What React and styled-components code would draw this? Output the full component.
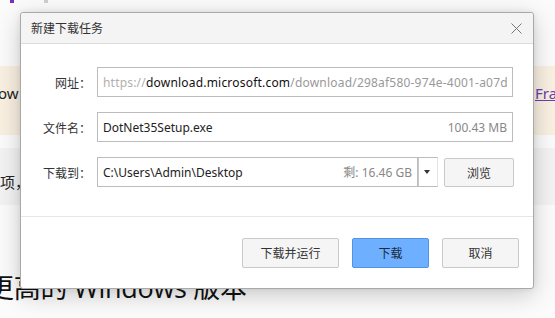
import React from "react";
import styled, { createGlobalStyle } from "styled-components";

const Global = createGlobalStyle`
  html, body { margin: 0; padding: 0; background: #fbfbfb; }
  body { font-family: "Noto Sans", "Noto Sans CJK SC", sans-serif; overflow: hidden; }
`;

const Page = styled.div`
  position: relative;
  width: 555px;
  height: 318px;
  overflow: hidden;
  background: #fbfbfb;
`;

const TopStrip = styled.div`
  height: 66px;
  display: flex;
  align-items: flex-start;
  gap: 30px;
  padding-left: 10px;
`;

const Mark = styled.div`
  width: 4px;
  height: 3px;
  background: ${(p) => p.$c};
`;

const Notice = styled.div`
  height: 69px;
  background: #f9f0e2;
  display: flex;
  align-items: center;
  justify-content: space-between;
  font-size: 15px;
  color: #222;
  padding-bottom: 16px;
  box-sizing: border-box;
`;

const NoticeText = styled.span`
  margin-left: -2px;
`;

const NoticeLink = styled.a`
  color: #6a3fb0;
  text-decoration: underline;
  margin-right: -14px;
  width: 34px;
  overflow: hidden;
  white-space: nowrap;
`;

const Gap = styled.div`
  height: ${(p) => p.$h}px;
`;

const GrayBand = styled.div`
  height: 57px;
  background: #f3f3f3;
  font-size: 15px;
  color: #222;
  padding-top: 23px;
  box-sizing: border-box;
`;

const Heading = styled.div`
  font-family: "Open Sans", "Noto Sans CJK SC", sans-serif;
  font-size: 27px;
  color: #111;
  margin-left: -13px;
  margin-top: 62px;
  white-space: nowrap;
  letter-spacing: -0.3px;
`;

const Dialog = styled.div`
  position: absolute;
  left: 20px;
  top: 12px;
  width: 514px;
  height: 277px;
  box-sizing: border-box;
  background: #fff;
  border: 1px solid #a9a9a9;
  border-radius: 3px;
  box-shadow: 0 6px 24px rgba(0, 0, 0, 0.2), 0 0 6px rgba(0, 0, 0, 0.08);
  display: flex;
  flex-direction: column;
  font-family: "Noto Sans", "Noto Sans CJK SC", sans-serif;
`;

const TitleBar = styled.div`
  height: 30px;
  flex: none;
  background: #f4f4f4;
  border-bottom: 1px solid #dcdcdc;
  border-radius: 3px 3px 0 0;
  display: flex;
  align-items: center;
  justify-content: space-between;
  padding: 0 10px 0 10px;
  font-size: 12px;
  color: #333;
`;

const CloseBtn = styled.div`
  width: 14px;
  height: 14px;
  display: flex;
  align-items: center;
  justify-content: center;
`;

const Body = styled.div`
  flex: 1;
  padding: 23px 20px 0 0;
  display: flex;
  flex-direction: column;
  gap: 15px;
  border-bottom: 1px solid #e6e6e6;
`;

const Row = styled.div`
  display: flex;
  align-items: center;
  height: 30px;
`;

const Label = styled.div`
  width: 70px;
  margin-right: 6px;
  flex: none;
  text-align: right;
  font-size: 12px;
  color: #333;
  font-family: "Noto Sans CJK SC", sans-serif;
`;

const Field = styled.div`
  flex: ${(p) => (p.$grow ? 1 : "none")};
  width: ${(p) => (p.$w ? `${p.$w}px` : "auto")};
  height: 30px;
  box-sizing: border-box;
  border: 1px solid #bcbcbc;
  background: #fff;
  display: flex;
  align-items: center;
  justify-content: space-between;
  padding: 0 5px 0 5px;
  font-size: 12px;
  color: #222;
  overflow: hidden;
  white-space: nowrap;
  min-width: 0;
`;

const Url = styled.span`
  letter-spacing: 0.2px;
  overflow: hidden;
`;

const Seg = styled.span`
  color: ${(p) => p.$c};
`;

const Side = styled.span`
  color: #888;
`;

const Drop = styled.div`
  width: 20px;
  height: 30px;
  box-sizing: border-box;
  border: 1px solid #bcbcbc;
  border-left: 1px solid #c8c8c8;
  border-right-color: #e4e4e4;
  display: flex;
  align-items: center;
  justify-content: center;
  flex: none;
`;

const Tri = styled.div`
  width: 0;
  height: 0;
  border-left: 3.5px solid transparent;
  border-right: 3.5px solid transparent;
  border-top: 4px solid #333;
  margin-left: -2px;
`;

const Button = styled.div`
  width: ${(p) => p.$w}px;
  height: ${(p) => p.$h || 30}px;
  box-sizing: border-box;
  border: 1px solid ${(p) => (p.$primary ? "#4f95e6" : "#c9c9c9")};
  background: ${(p) => (p.$primary ? "#6eb0ff" : "#f5f5f5")};
  border-radius: 2px;
  display: flex;
  align-items: center;
  justify-content: center;
  font-size: 12px;
  color: ${(p) => (p.$primary ? "#1a2a40" : "#333")};
  font-family: "Noto Sans CJK SC", sans-serif;
  flex: none;
  margin-left: ${(p) => p.$ml || 0}px;
`;

const Footer = styled.div`
  height: 71px;
  flex: none;
  display: flex;
  align-items: center;
  justify-content: flex-end;
  gap: 13px;
  padding-right: 14px;
  box-sizing: border-box;
`;

export default function App() {
  return (
    <>
      <Global />
      <Page>
        <TopStrip>
          <Mark $c="#7b2fbf" />
          <Mark $c="#cfcfcf" />
        </TopStrip>
        <Notice>
          <NoticeText>ow</NoticeText>
          <NoticeLink href="#">Framework</NoticeLink>
        </Notice>
        <Gap $h={13} />
        <GrayBand>项，</GrayBand>
        <Heading>更高的 Windows 版本</Heading>

        <Dialog>
          <TitleBar>
            <span>新建下载任务</span>
            <CloseBtn>
              <svg width="13" height="13" viewBox="0 0 13 13">
                <path d="M1.5 1.5 L11.5 11.5 M11.5 1.5 L1.5 11.5" stroke="#777" strokeWidth="1" fill="none" />
              </svg>
            </CloseBtn>
          </TitleBar>
          <Body>
            <Row>
              <Label>网址：</Label>
              <Field $grow>
                <Url>
                  <Seg $c="#b0b0b0">https://</Seg>
                  <Seg $c="#111">download.microsoft.com</Seg>
                  <Seg $c="#999">/download/298af580-974e-4001-a07d</Seg>
                </Url>
              </Field>
            </Row>
            <Row>
              <Label>文件名：</Label>
              <Field $grow>
                <span>DotNet35Setup.exe</span>
                <Side>100.43 MB</Side>
              </Field>
            </Row>
            <Row>
              <Label>下载到：</Label>
              <Field $w={321}>
                <span>C:\Users\Admin\Desktop</span>
                <Side>剩: 16.46 GB</Side>
              </Field>
              <Drop>
                <Tri />
              </Drop>
              <Button $w={70} $h={29} $ml={6}>浏览</Button>
            </Row>
          </Body>
          <Footer>
            <Button $w={97}>下载并运行</Button>
            <Button $w={77} $primary>下载</Button>
            <Button $w={77}>取消</Button>
          </Footer>
        </Dialog>
      </Page>
    </>
  );
}
